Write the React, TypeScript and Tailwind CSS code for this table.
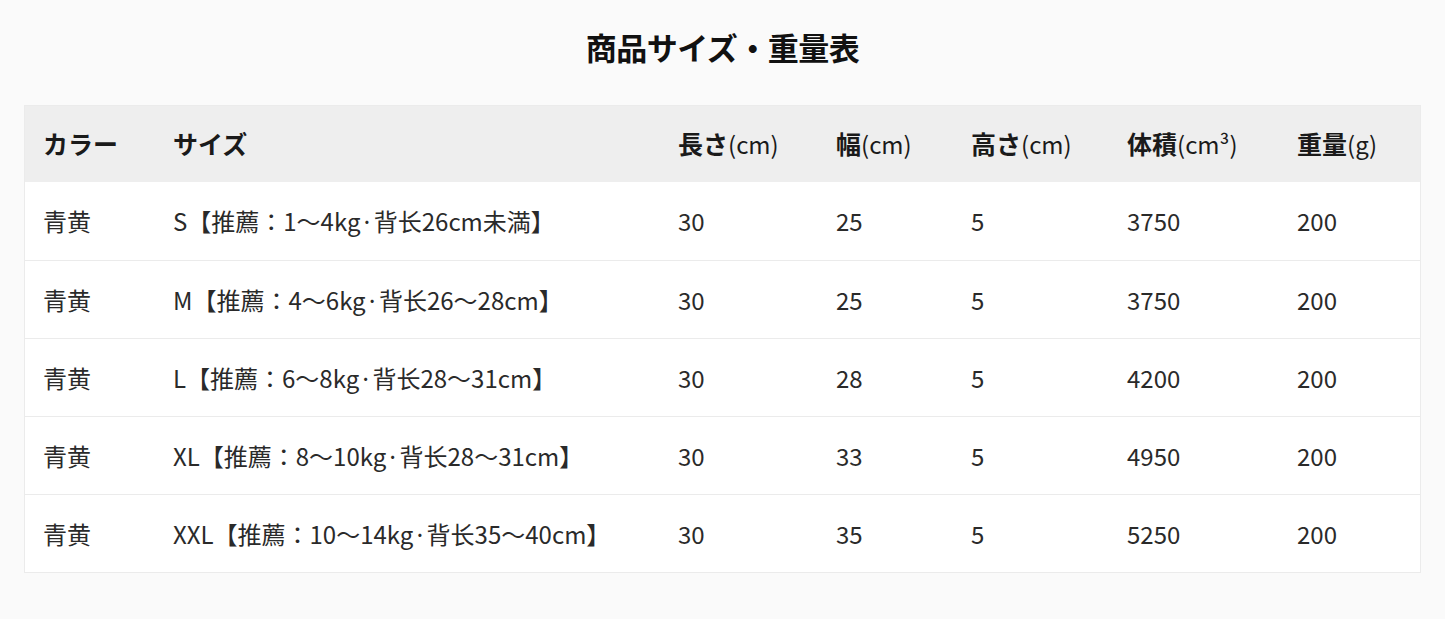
import React from "react";

const headers = ["カラー", "サイズ", "長さ(cm)", "幅(cm)", "高さ(cm)", "体積(cm³)", "重量(g)"];

const rows = [
  ["青黄", "S【推薦：1～4kg·背长26cm未満】", "30", "25", "5", "3750", "200"],
  ["青黄", "M【推薦：4～6kg·背长26～28cm】", "30", "25", "5", "3750", "200"],
  ["青黄", "L【推薦：6～8kg·背长28～31cm】", "30", "28", "5", "4200", "200"],
  ["青黄", "XL【推薦：8～10kg·背长28～31cm】", "30", "33", "5", "4950", "200"],
  ["青黄", "XXL【推薦：10～14kg·背长35～40cm】", "30", "35", "5", "5250", "200"],
];

const grid = "grid grid-cols-[130px_505px_158px_135px_156px_170px_143px]";

function HeaderCell({ text }: { text: string }) {
  const m = text.match(/^([^(]+)(\(.*\))?$/);
  const main = m ? m[1] : text;
  const unit = m && m[2] ? m[2] : "";
  return (
    <div className="pl-[18px] flex items-center">
      <span className="font-bold text-[25px] text-[#1a1a1a]">{main}</span>
      {unit && <span className="text-[24px] text-[#1a1a1a] font-normal">{unit}</span>}
    </div>
  );
}

export default function App() {
  return (
    <div
      className="w-[1445px] h-[619px] bg-[#fafafa] pt-[25px]"
      style={{ fontFamily: '"Noto Sans CJK JP", "Noto Sans", sans-serif' }}
    >
      <h1 className="text-center text-[31px] font-bold text-[#111] leading-[44px] tracking-[-0.5px]">
        商品サイズ・重量表
      </h1>
      <div className="mt-[36px] ml-[24px] w-[1397px] border border-[#ebebeb] bg-white">
        <div className={`${grid} h-[76px] bg-[#eeeeee]`}>
          {headers.map((h) => (
            <HeaderCell key={h} text={h} />
          ))}
        </div>
        {rows.map((r, i) => (
          <div
            key={i}
            className={`${grid} h-[78px] ${i > 0 ? "border-t border-[#ebebeb]" : ""}`}
          >
            {r.map((c, j) => (
              <div key={j} className="pl-[18px] flex items-center text-[24px] text-[#2a2a2a]">
                {c}
              </div>
            ))}
          </div>
        ))}
      </div>
    </div>
  );
}
